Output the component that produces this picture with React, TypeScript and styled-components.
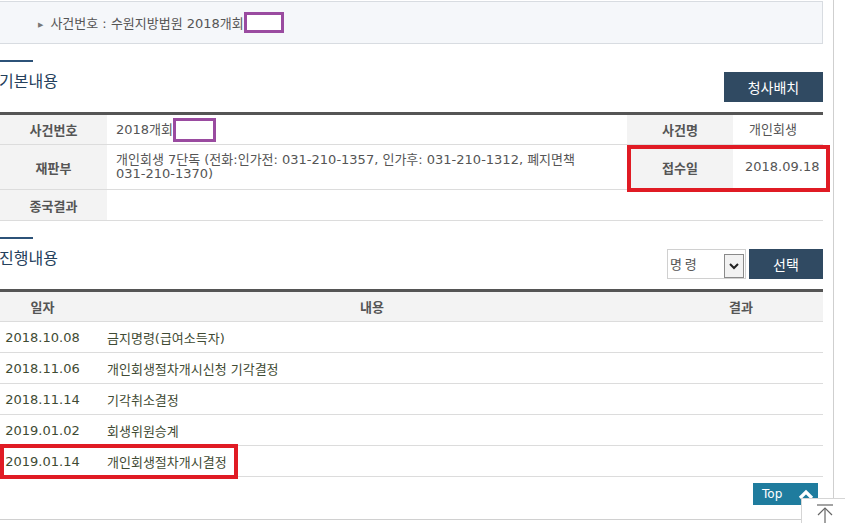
import React from 'react';
import styled, { createGlobalStyle } from 'styled-components';

const GlobalStyle = createGlobalStyle`
    body {
        margin: 0;
        background: #fff;
        font-family: "DejaVu Sans", "Noto Sans CJK KR", sans-serif;
        color: #555;
        overflow: hidden;
    }
    * {
        box-sizing: border-box;
    }
`;

const Page = styled.div`
    display: flex;
    width: 834px;
    min-height: 523px;
    border-right: 1px solid #cfcfcf;
`;

const Content = styled.div`
    width: 823px;
    display: flex;
    flex-direction: column;
`;

const CaseBar = styled.div`
    margin-top: 1px;
    height: 43px;
    margin-left: -2px;
    padding-left: 39px;
    display: flex;
    align-items: center;
    background: #f5f7fa;
    border: 1px solid #d8dce1;
    font-size: 13px;
    color: #555;
`;

const Bullet = styled.span`
    font-size: 7px;
    color: #777;
    margin: 4px 7px 0 0;
`;

const Redacted = styled.span<{ $w: number; $h: number }>`
    display: inline-block;
    width: ${p => p.$w}px;
    height: ${p => p.$h}px;
    border: 3px solid #9a4ba0;
    background: #fff;
    vertical-align: middle;
`;

const SectionHead = styled.div<{ $top: number }>`
    display: flex;
    justify-content: space-between;
    align-items: flex-end;
    margin-top: ${p => p.$top}px;
    height: 52px;
    padding-bottom: 10px;
`;

const TitleBlock = styled.div`
    align-self: flex-start;
    display: flex;
    flex-direction: column;
`;

const TitleBar = styled.div`
    width: 33px;
    height: 2px;
    background: #2c5278;
`;

const Title = styled.h2`
    margin: 8px 0 0 -1px;
    font-family: "Noto Sans CJK KR", sans-serif;
    font-size: 16px;
    font-weight: 400;
    line-height: 20px;
    color: #24405c;
`;

const Controls = styled.div`
    display: flex;
    gap: 3px;
`;

const DarkButton = styled.button<{ $w: number }>`
    width: ${p => p.$w}px;
    height: 30px;
    border: 0;
    padding: 0;
    background: #304a62;
    color: #fff;
    font-family: "Noto Sans CJK KR", sans-serif;
    font-size: 14px;
    cursor: pointer;
`;

const SelectBox = styled.div`
    width: 79px;
    height: 30px;
    display: flex;
    border: 1px solid #d0d0d0;
    background: #fff;
    padding: 4px 1px 1px 0;
`;

const SelectField = styled.select`
    flex: 1;
    min-width: 0;
    appearance: none;
    border: 0;
    background: transparent;
    font-family: "Noto Sans CJK KR", sans-serif;
    font-size: 13px;
    color: #555;
    padding: 0 2px;
    align-self: flex-start;
    height: 18px;
    outline: none;
`;

const SelectArrow = styled.span`
    width: 20px;
    height: 24px;
    display: flex;
    align-items: center;
    justify-content: center;
    border: 1px solid #8a8a8a;
    background: #f2f2f2;
`;

const TableWrap = styled.div`
    position: relative;
    border-top: 3px solid #555;
`;

const Grid = styled.div<{ $cols: string; $rows: string }>`
    display: grid;
    grid-template-columns: ${p => p.$cols};
    grid-template-rows: ${p => p.$rows};
`;

const HeadCell = styled.div<{ $span?: number }>`
    grid-column: span ${p => p.$span ?? 1};
    display: flex;
    align-items: center;
    justify-content: center;
    background: #f3f3f3;
    border-bottom: 1px solid #dcdcdc;
    font-family: "Noto Sans CJK KR", sans-serif;
    font-size: 13px;
    font-weight: 700;
    color: #555;
`;

const ValueCell = styled.div<{ $span?: number; $pad?: number }>`
    grid-column: span ${p => p.$span ?? 1};
    display: flex;
    align-items: center;
    padding-left: ${p => p.$pad ?? 9}px;
    border-bottom: 1px solid #dcdcdc;
    font-size: 13px;
    line-height: 14px;
    color: #555;
`;

const DateCell = styled.div`
    display: flex;
    align-items: center;
    justify-content: center;
    border-bottom: 1px solid #dcdcdc;
    font-size: 13px;
    color: #3f4b34;
`;

const TextCell = styled.div<{ $span?: number }>`
    grid-column: span ${p => p.$span ?? 1};
    display: flex;
    align-items: center;
    padding-left: 22px;
    border-bottom: 1px solid #dcdcdc;
    font-size: 13px;
    color: #3f4b34;
`;

const Mark = styled.div`
    position: absolute;
    border: 4px solid #e01b24;
    pointer-events: none;
`;

const Footer = styled.div`
    display: flex;
    justify-content: flex-end;
    padding: 6px 5px 14px 0;
    border-bottom: 1px solid #d0d0d0;
`;

const TopButton = styled.button`
    width: 65px;
    height: 22px;
    border: 0;
    padding: 0 4px 0 9px;
    display: flex;
    align-items: center;
    justify-content: space-between;
    background: #1f7c9e;
    color: #fff;
    font-family: "DejaVu Sans", sans-serif;
    font-size: 12px;
    cursor: pointer;
`;

const FloatTop = styled.div`
    position: fixed;
    left: 801px;
    top: 498px;
    width: 48px;
    height: 40px;
    background: #fff;
    border: 1px solid #d5d5d5;
    display: flex;
    justify-content: center;
    padding-top: 4px;
`;

const progress = [
    ['2018.10.08', '금지명령(급여소득자)'],
    ['2018.11.06', '개인회생절차개시신청 기각결정'],
    ['2018.11.14', '기각취소결정'],
    ['2019.01.02', '회생위원승계'],
    ['2019.01.14', '개인회생절차개시결정'],
];

const App: React.FC = () => (
    <>
        <GlobalStyle />
        <Page>
            <Content>
                <CaseBar>
                    <Bullet>▶</Bullet>
                    <span>사건번호 : 수원지방법원 2018개회</span>
                    <Redacted $w={40} $h={21} />
                </CaseBar>

                <SectionHead $top={16}>
                    <TitleBlock>
                        <TitleBar />
                        <Title>기본내용</Title>
                    </TitleBlock>
                    <DarkButton $w={99}>청사배치</DarkButton>
                </SectionHead>

                <TableWrap>
                    <Grid $cols="107px 520px 106px 90px" $rows="30px 45px 31px">
                        <HeadCell>사건번호</HeadCell>
                        <ValueCell>
                            2018개회<Redacted $w={43} $h={24} />
                        </ValueCell>
                        <HeadCell>사건명</HeadCell>
                        <ValueCell $pad={16}>개인회생</ValueCell>

                        <HeadCell>재판부</HeadCell>
                        <ValueCell>
                            <span>
                                개인회생 7단독 (전화:인가전: 031-210-1357, 인가후: 031-210-1312, 폐지면책<br />
                                031-210-1370)
                            </span>
                        </ValueCell>
                        <HeadCell>접수일</HeadCell>
                        <ValueCell $pad={12}>2018.09.18</ValueCell>

                        <HeadCell>종국결과</HeadCell>
                        <ValueCell $span={3} />
                    </Grid>
                    <Mark style={{ top: 30, left: 627, width: 203, height: 47 }} />
                </TableWrap>

                <SectionHead $top={16}>
                    <TitleBlock>
                        <TitleBar />
                        <Title>진행내용</Title>
                    </TitleBlock>
                    <Controls>
                        <SelectBox>
                            <SelectField defaultValue="명령">
                                <option value="명령">명 령</option>
                            </SelectField>
                            <SelectArrow>
                                <svg width="10" height="7" viewBox="0 0 10 7">
                                    <polyline points="1,1 5,5 9,1" fill="none" stroke="#222" strokeWidth="2" />
                                </svg>
                            </SelectArrow>
                        </SelectBox>
                        <DarkButton $w={74}>선택</DarkButton>
                    </Controls>
                </SectionHead>

                <TableWrap>
                    <Grid $cols="85px 574px 164px" $rows="30px repeat(5, 31px)">
                        <HeadCell>일자</HeadCell>
                        <HeadCell>내용</HeadCell>
                        <HeadCell>결과</HeadCell>
                        {progress.map(([date, text]) => (
                            <React.Fragment key={date}>
                                <DateCell>{date}</DateCell>
                                <TextCell $span={2}>{text}</TextCell>
                            </React.Fragment>
                        ))}
                    </Grid>
                    <Mark style={{ top: 152, left: 0, width: 238, height: 35 }} />
                </TableWrap>

                <Footer>
                    <TopButton>
                        <span>Top</span>
                        <svg width="16" height="12" viewBox="0 0 16 12">
                            <polyline points="2,10 8,4 14,10" fill="none" stroke="#fff" strokeWidth="3.2" />
                        </svg>
                    </TopButton>
                </Footer>
            </Content>
        </Page>
        <FloatTop>
            <svg width="22" height="22" viewBox="0 0 22 22">
                <line x1="3" y1="2" x2="19" y2="2" stroke="#666" strokeWidth="1.2" />
                <line x1="11" y1="5" x2="11" y2="22" stroke="#666" strokeWidth="1.2" />
                <polyline points="4,12 11,5 18,12" fill="none" stroke="#666" strokeWidth="1.2" />
            </svg>
        </FloatTop>
    </>
);

export default App;
